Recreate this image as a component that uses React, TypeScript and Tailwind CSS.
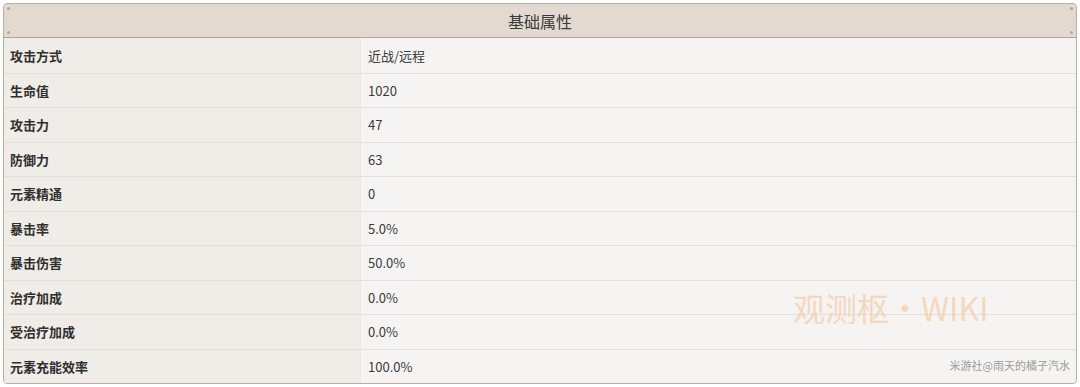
const rows: [string, string][] = [
  ["攻击方式", "近战/远程"],
  ["生命值", "1020"],
  ["攻击力", "47"],
  ["防御力", "63"],
  ["元素精通", "0"],
  ["暴击率", "5.0%"],
  ["暴击伤害", "50.0%"],
  ["治疗加成", "0.0%"],
  ["受治疗加成", "0.0%"],
  ["元素充能效率", "100.0%"],
];

const font = { fontFamily: '"Noto Sans CJK SC", "Noto Sans", sans-serif' };

export default function App() {
  return (
    <div className="h-[387px] w-[1080px] bg-white p-[3px]" style={font}>
      <div className="relative h-[381px] overflow-hidden rounded-[4px] border border-[#b9aca2] bg-[#f5f4f3]">
        <div className="relative flex h-[34px] items-center justify-center border-b border-[#b3a497] bg-[#e2d9d1] text-[16px] text-[#3a3a3a]">
          基础属性
          <span className="absolute left-[3px] top-[3px] h-[3px] w-[3px] rounded-full bg-[#b3a497]" />
          <span className="absolute bottom-[3px] left-[3px] h-[3px] w-[3px] rounded-full bg-[#b3a497]" />
          <span className="absolute right-[3px] top-[3px] h-[3px] w-[3px] rounded-full bg-[#b3a497]" />
          <span className="absolute bottom-[3px] right-[3px] h-[3px] w-[3px] rounded-full bg-[#b3a497]" />
        </div>
        {rows.map(([k, v], i) => (
          <div
            key={k}
            className={`grid h-[34.5px] grid-cols-[357px_1fr] text-[13px] ${i > 0 ? "border-t border-[#e3dfdb]" : ""}`}
          >
            <div className="flex items-center border-r border-[#ebe7e3] bg-[#f0ece8] pl-[6px] font-bold text-[#2f2f2f]">
              {k}
            </div>
            <div className="flex items-center pl-[7px] text-[#3a3a3a]">{v}</div>
          </div>
        ))}
        {/* watermarks over the table */}
        <div className="pointer-events-none absolute left-[789px] top-[287px] text-[32px] leading-none text-[#f3d2b3] opacity-80">
          观测枢・WIKI
        </div>
        <div className="absolute bottom-[10px] right-[6px] text-[11px] text-[#9a9a9a]">
          米游社@雨天的橘子汽水
        </div>
      </div>
    </div>
  );
}
